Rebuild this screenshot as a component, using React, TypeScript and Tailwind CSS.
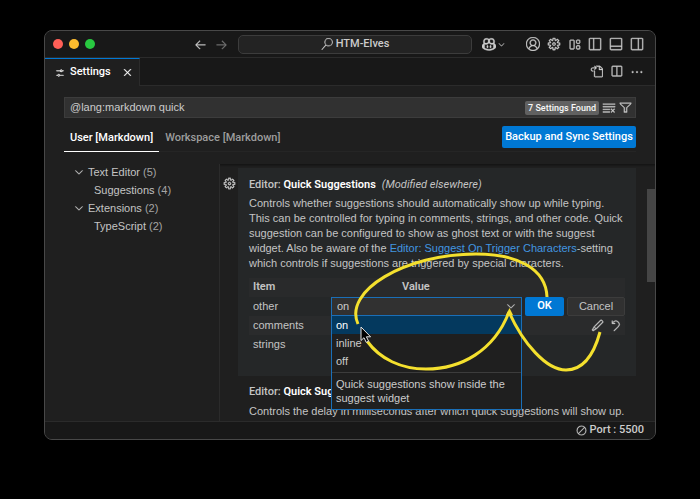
import type { ReactNode } from "react";
import {
  VscAccount,
  VscArrowLeft,
  VscArrowRight,
  VscChevronDown,
  VscCircleSlash,
  VscClearAll,
  VscClose,
  VscDiscard,
  VscEdit,
  VscEllipsis,
  VscFilter,
  VscGoToFile,
  VscLayout,
  VscLayoutPanelOff,
  VscLayoutSidebarLeftOff,
  VscLayoutSidebarRightOff,
  VscSearch,
  VscSettings,
  VscGear,
  VscSplitHorizontal,
  VscCopilot,
} from "react-icons/vsc";

function IconButton({ label, className = "", children }: { label: string; className?: string; children: ReactNode }) {
  return (
    <button type="button" aria-label={label} className={`flex shrink-0 items-center justify-center ${className}`}>
      {children}
    </button>
  );
}

function TitleBar() {
  return (
    <header className="flex h-[27px] shrink-0 items-center border-b border-[#2b2b2b] bg-[#181818] pr-[11px] pl-2">
      <div className="flex gap-[6px]">
        <span className="size-[10px] rounded-full bg-[#ff5f57]" />
        <span className="size-[10px] rounded-full bg-[#febc2e]" />
        <span className="size-[10px] rounded-full bg-[#28c840]" />
      </div>
      <div className="flex min-w-0 flex-1 items-center justify-end">
        <IconButton label="Go back" className="mr-2 text-[#cccccc]">
          <VscArrowLeft size={13} />
        </IconButton>
        <IconButton label="Go forward" className="mr-[10px] text-[#757575]">
          <VscArrowRight size={13} />
        </IconButton>
        <button
          type="button"
          className="flex h-[19px] w-[234px] items-center justify-center gap-[3px] rounded-[5px] border border-[#3c3c3c] bg-[#232323] font-['Roboto',sans-serif] text-[11px] text-[#cccccc]"
        >
          <VscSearch size={12} />
          HTM-Elves
        </button>
        <IconButton label="Copilot" className="ml-[10px] text-[#cccccc]">
          <VscCopilot size={14} />
          <VscChevronDown size={9} className="ml-[1px]" />
        </IconButton>
      </div>
      <div className="ml-[20px] flex gap-[7px] text-[#cccccc]">
        <IconButton label="Accounts"><VscAccount size={14} /></IconButton>
        <IconButton label="Manage"><VscGear size={14} /></IconButton>
        <IconButton label="Customize layout"><VscLayout size={13} /></IconButton>
        <IconButton label="Toggle primary side bar"><VscLayoutSidebarLeftOff size={14} /></IconButton>
        <IconButton label="Toggle panel"><VscLayoutPanelOff size={14} /></IconButton>
        <IconButton label="Toggle secondary side bar"><VscLayoutSidebarRightOff size={14} /></IconButton>
      </div>
    </header>
  );
}

function TabBar() {
  return (
    <div className="flex h-7 shrink-0 bg-[#181818]">
      <div className="flex w-[95px] items-center border-t border-r border-t-[#0078d4] border-r-[#2b2b2b] bg-[#1f1f1f] pr-[5px] pl-[10px] text-white">
        <VscSettings size={10} />
        <span className="ml-[5px] flex-1 font-['Roboto',sans-serif] text-[11px]">Settings</span>
        <IconButton label="Close tab"><VscClose size={13} /></IconButton>
      </div>
      <div className="flex flex-1 items-center justify-end gap-[7px] border-b border-[#2b2b2b] pr-[11px] text-[#cccccc]">
        <IconButton label="Open settings (JSON)"><VscGoToFile size={13} /></IconButton>
        <IconButton label="Split editor"><VscSplitHorizontal size={13} /></IconButton>
        <IconButton label="More actions"><VscEllipsis size={14} /></IconButton>
      </div>
    </div>
  );
}

function SearchRow() {
  return (
    <div className="flex h-[21px] items-center gap-[3px] border border-[#3c3c3c] bg-[#313131] pr-[3px] pl-[5px]">
      <input
        aria-label="Search settings"
        defaultValue="@lang:markdown quick"
        className="min-w-0 flex-1 bg-transparent text-[11px] text-[#cccccc] outline-none"
      />
      <span className="rounded-[2px] bg-[#616161] px-[3px] font-['Roboto',sans-serif] text-[9px] leading-[14px] text-[#f8f8f8]">
        7 Settings Found
      </span>
      <IconButton label="Clear search" className="text-[#cccccc]"><VscClearAll size={14} /></IconButton>
      <IconButton label="Filter settings" className="text-[#cccccc]"><VscFilter size={13} /></IconButton>
    </div>
  );
}

function ScopeRow() {
  return (
    <div className="mt-[8px] flex h-[26px] items-start border-b border-[#252525] font-['Roboto',sans-serif]">
      <button type="button" className="-mb-px h-[26px] border-b border-white px-[6px] text-[11px] text-white">
        User [Markdown]
      </button>
      <button type="button" className="h-[26px] border-b border-transparent px-[6px] text-[11px] text-[#9d9d9d]">
        Workspace [Markdown]
      </button>
      <button type="button" className="ml-auto h-[22px] w-[134px] rounded-[2px] bg-[#0078d4] text-[11px] whitespace-nowrap text-white">
        Backup and Sync Settings
      </button>
    </div>
  );
}

function TreeItem({ label, count, nested = false }: { label: string; count: number; nested?: boolean }) {
  return (
    <li className={`flex h-[18px] items-center ${nested ? "pl-[49px]" : "pl-[28px]"}`}>
      {!nested && <VscChevronDown size={12} className="mr-[3px] shrink-0" />}
      <span>
        {label} <span className="text-[#a5a5a5]">({count})</span>
      </span>
    </li>
  );
}

function Annotations() {
  return (
    <svg
      aria-hidden="true"
      viewBox="249 278 376 100"
      className="pointer-events-none absolute top-0 left-0 z-20 h-[100px] w-[376px] overflow-visible"
      fill="none"
    >
      <g stroke="#f4e02e" strokeWidth="3">
        <path d="M547 297 C546 269 518 254 476 254 C405 254 343 291 358 324" />
        <path d="M367 341 C380 359 401 369 426 369 C461 369 494 351 509 312" />
        <path d="M509 312 C523 343 546 370 566 370 C584 370 594 354 600 332" />
      </g>
      <path d="M509.500 308 l3.500 7 h-7z" fill="#f4e02e" />
      <path d="M361 327 v13.500 l3 -2.800 l2.200 4.600 l2.400 -1.100 l-2.200 -4.400 h4.200z" fill="#000" stroke="#e4e4e4" strokeWidth="1" />
    </svg>
  );
}

function OptionList() {
  return (
    <div className="absolute top-[18px] right-0 left-0 z-10 border border-[#1a6fb8] bg-[#1f1f1f] text-[#cccccc]">
      <ul role="listbox" aria-label="Value for other" className="pb-[2px]">
        <li role="option" aria-selected="true" className="h-[18px] bg-[#04395e] px-[4px] leading-[18px] text-white">on</li>
        <li role="option" aria-selected="false" className="h-[18px] px-[4px] leading-[18px]">inline</li>
        <li role="option" aria-selected="false" className="h-[18px] px-[4px] leading-[18px]">off</li>
      </ul>
      <p className="border-t border-[#3c3c3c] px-[4px] pt-[4px] pb-[4px] leading-[14px]">
        Quick suggestions show inside the suggest widget
      </p>
    </div>
  );
}

function ValueTable() {
  return (
    <div className="relative mt-[7px]">
      <table className="w-full table-fixed border-collapse text-left">
        <thead className="font-['Roboto',sans-serif]">
          <tr className="h-[19px] bg-[#292a2b]">
            <th className="w-[82px] p-0 pl-[4px] font-semibold">Item</th>
            <th className="p-0 pl-[71px] font-semibold">Value</th>
          </tr>
        </thead>
        <tbody>
          <tr className="h-[19px]">
            <td className="p-0 pl-[4px]"><label htmlFor="value-other">other</label></td>
            <td className="p-0">
              <div className="flex h-[19px] gap-[3px]">
                <div className="relative min-w-0 flex-1">
                  <select
                    id="value-other"
                    defaultValue="on"
                    className="block h-[19px] w-full appearance-none border border-[#1a6fb8] bg-[#313131] px-[5px] text-[11px] text-[#cccccc] outline-none"
                  >
                    <option>on</option>
                    <option>inline</option>
                    <option>off</option>
                  </select>
                  <VscChevronDown size={12} className="pointer-events-none absolute top-[3px] right-[5px]" />
                  <OptionList />
                </div>
                <button type="button" className="w-[39px] rounded-[2px] bg-[#0078d4] font-['Roboto',sans-serif] font-semibold text-white">
                  OK
                </button>
                <button type="button" className="w-[58px] rounded-[2px] border border-[#3c3c3c] bg-[#313131]">Cancel</button>
              </div>
            </td>
          </tr>
          <tr className="h-[19px] bg-[#2a2b2c]">
            <td className="p-0 pl-[4px]">comments</td>
            <td className="p-0">
              <div className="flex justify-end gap-[5px] pr-[3px]">
                <IconButton label="Edit item"><VscEdit size={13} /></IconButton>
                <IconButton label="Reset item"><VscDiscard size={13} /></IconButton>
              </div>
            </td>
          </tr>
          <tr className="h-[19px]">
            <td className="p-0 pl-[4px]">strings</td>
            <td className="p-0" />
          </tr>
        </tbody>
      </table>
      <Annotations />
    </div>
  );
}

function SettingsList() {
  return (
    <main className="relative flex min-w-0 flex-1 overflow-hidden border-l border-[#2b2b2b] text-[#c4c4c4]">
      <div className="absolute inset-x-0 top-0 h-[3px] bg-gradient-to-b from-[#131313] to-transparent" />
      <IconButton label="More setting actions" className="mt-[13px] ml-[3px] size-[13px] text-[#cccccc]">
        <VscGear size={13} />
      </IconButton>
      <div className="mr-[19px] ml-[2px] min-w-0 flex-1 pt-[4px]">
        <section className="h-[208px] bg-[#252728] px-[11px] pt-[9px]">
          <h2 className="font-['Roboto',sans-serif] leading-[16px]">
            <span className="font-medium">Editor: </span>
            <span className="font-semibold text-white">Quick Suggestions</span>
            <em className="ml-[6px] font-normal">(Modified elsewhere)</em>
          </h2>
          <p className="mt-[3px] leading-[15px]">
            Controls whether suggestions should automatically show up while typing. This can be controlled for typing in
            comments, strings, and other code. Quick suggestion can be configured to show as ghost text or with the suggest
            widget. Also be aware of the <a href="#trigger" className="text-[#4296e0]">Editor: Suggest On Trigger Characters</a>
            -setting which controls if suggestions are triggered by special characters.
          </p>
          <ValueTable />
        </section>
        <section className="px-[11px] pt-[8px]">
          <h2 className="font-['Roboto',sans-serif] leading-[16px] font-medium">
            Editor: <span className="font-semibold text-white">Quick Suggestions Delay</span>
          </h2>
          <p className="mt-[4px] leading-[15px] whitespace-nowrap">
            Controls the delay in milliseconds after which quick suggestions will show up.
          </p>
        </section>
      </div>
      <div className="absolute top-[25px] right-0 h-[93px] w-2 bg-[#454545]" />
    </main>
  );
}

export default function App() {
  return (
    <div className="flex h-screen bg-black px-11 pt-[30px] pb-[59px] font-['Liberation_Sans',Arial,sans-serif] text-[11px] font-medium [&_svg]:stroke-[0.4]">
      <div className="flex min-w-0 flex-1 flex-col overflow-hidden rounded-[8px] border border-[#484848] bg-[#1f1f1f]">
        <TitleBar />
        <TabBar />
        <div className="shrink-0 px-[19px] pt-[11px]">
          <SearchRow />
          <ScopeRow />
        </div>
        <div className="mt-[12px] flex min-h-0 flex-1">
          <nav aria-label="Settings sections" className="w-[174px] shrink-0 text-[#c4c4c4]">
            <ul className="-mt-px">
              <TreeItem label="Text Editor" count={5} />
              <TreeItem label="Suggestions" count={4} nested />
              <TreeItem label="Extensions" count={2} />
              <TreeItem label="TypeScript" count={2} nested />
            </ul>
          </nav>
          <SettingsList />
        </div>
        <footer className="flex h-[18px] shrink-0 items-center justify-end border-t border-[#2b2b2b] bg-[#181818] pr-[11px] font-['Roboto',sans-serif] text-[#cccccc]">
          <VscCircleSlash size={11} className="mr-[3px]" />
          Port : 5500
        </footer>
      </div>
    </div>
  );
}
